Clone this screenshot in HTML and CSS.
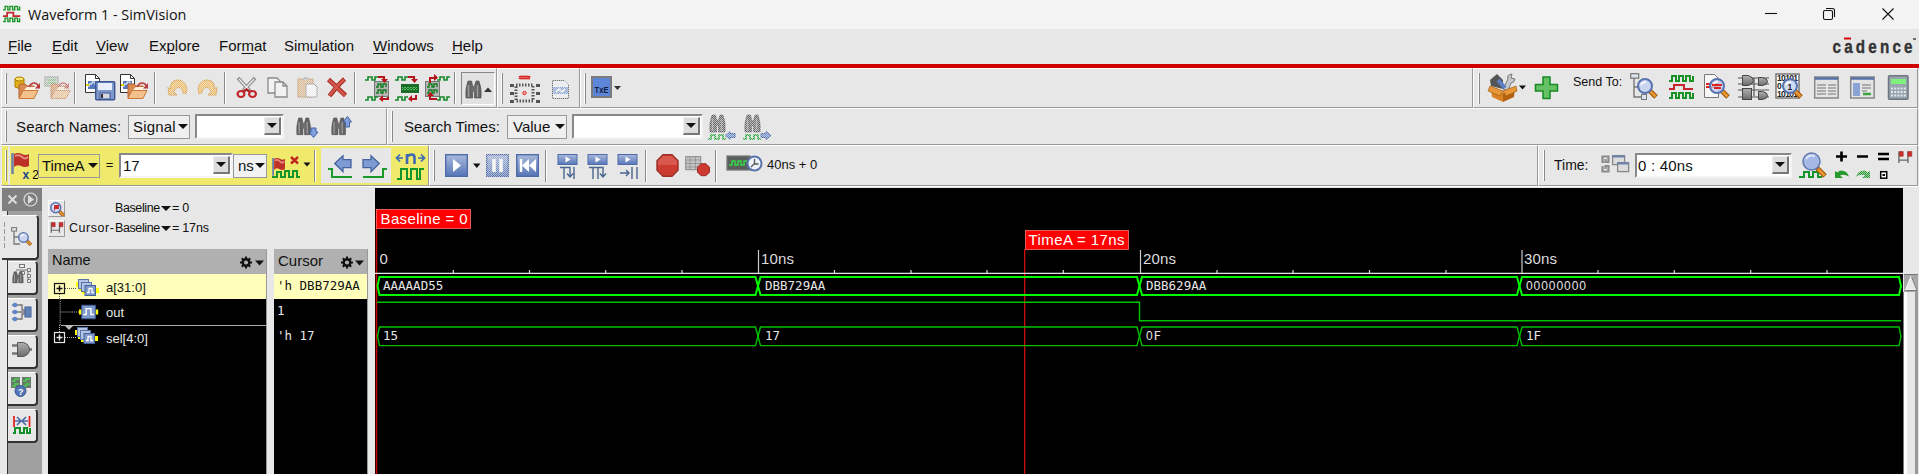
FILE: index.html
```html
<!DOCTYPE html>
<html lang="en">
<head>
<meta charset="utf-8">
<title>Waveform 1 - SimVision</title>
<link rel="stylesheet" href="styles.css">
</head>
<body>
<svg class="defs" width="0" height="0" aria-hidden="true">
  <defs>
    <pattern id="checker" width="2" height="2" patternUnits="userSpaceOnUse"><rect width="2" height="2" fill="#555"/><rect width="1" height="1" fill="#fff"/><rect x="1" y="1" width="1" height="1" fill="#fff"/></pattern>
    <mask id="dither" maskUnits="userSpaceOnUse" x="0" y="0" width="1919" height="474"><rect width="1919" height="474" fill="url(#checker)"/></mask>
    <linearGradient id="blue" x1="0" y1="0" x2="0" y2="1"><stop offset="0" stop-color="#a9b9dc"/><stop offset="1" stop-color="#5676b8"/></linearGradient>
    <linearGradient id="steel" x1="0" y1="0" x2="0" y2="1"><stop offset="0" stop-color="#b0b0b0"/><stop offset="1" stop-color="#6c6c6c"/></linearGradient>
    <g id="folder"><path d="M1 15V2q0-1 1-1h5l2 2h7v3" fill="#d98a50" stroke="#b5622c"/><path d="M1 15.500L5 7.500h15l-4 8z" fill="#f4c08c" stroke="#c97838"/><path d="M9 4h8v3H6z" fill="#fff3df"/></g>
    <g id="redo-arrow"><path d="M0 5Q3-1 8 2l2 3" fill="none" stroke="#b83a3a" stroke-width="1.500"/><path d="M11 1v5.500H6z" fill="#b83a3a"/></g>
    <g id="page"><path d="M.5.5h10l4 4v14H.5z" fill="#fff" stroke="#333"/><path d="M10.500.500v4h4" fill="none" stroke="#333"/><rect x="3" y="7" width="9" height="8" fill="#5578bd"/><path d="M4 13v-3h3v-2h3v3" fill="none" stroke="#fff"/><path d="M1 11h3" stroke="#e0d000" stroke-width="2"/></g>
    <g id="binoc"><path d="M3 1h3.500l1.200 5v12H1Q0 9 3 1zM11 1h3q3 8 2 17H9.500V6z" fill="#646464" stroke="#484848" stroke-width=".6"/><path d="M6 6h5v6H6z" fill="#6d6d6d"/><path d="M3.500 5v12M12.500 5v12" stroke="#9b9b9b" stroke-width="1.500"/></g>
    <g id="wave"><path d="M0 6h3V1h4v5h3V1h4v5h3V1h4v5h3V1" fill="none" stroke="#199326" stroke-width="2"/></g>
    <g id="chip"><rect x=".5" y=".5" width="14" height="15" fill="#b5b5b5" stroke="#777"/><path d="M2 6h2V3h3v3h2V3h3v3M2 12h2V9h3v3h2V9h3v3" fill="none" stroke="#117c1d" stroke-width="1.400"/></g>
    <g id="lens"><path d="M12.500 12.500l6.500 6.500" stroke="#a3570f" stroke-width="5"/><path d="M13 13l5.500 5.500" stroke="#e79a2d" stroke-width="2.500"/><circle cx="8" cy="8" r="7" fill="#c3d1f1" fill-opacity=".8" stroke="#5874b0" stroke-width="2"/><path d="M4 7q1-3 5-3" fill="none" stroke="#fff" stroke-width="1.500"/></g>
    <g id="flag"><path d="M1.500 0v21" stroke="#6b7fae" stroke-width="2.500"/><path d="M3 1q4-2 8 0t7 0v12q-4 2-8 0t-7 1z" fill="#bd3127"/><path d="M4 3q4-2 7 1t6 0" fill="none" stroke="#e78b80" stroke-width="2"/></g>
    <g id="left-arrow"><path d="M.7 8.500L9 .700v4h8v8H9v4z" fill="#7e9bd4" stroke="#46639f" stroke-width="1.300"/></g>
    <g id="undo-curve"><path d="M1 8l1 8h8l-3.500-3q2.500-6 7-4 3 1.500 2.500 5l3 1q2.500-6-1-10.500Q13-1 6.500 2 3 4 3.500 10z" fill="#f3c06a" stroke="#d9983a"/></g>
    <g id="bluebox"><rect x=".7" y=".7" width="21.600" height="21.600" fill="url(#blue)" stroke="#4f6ba8" stroke-width="1.400"/></g>
    <g id="stepbox"><rect x=".5" y=".5" width="19" height="10" fill="url(#blue)" stroke="#4f6ba8"/><path d="M8 2.500v6l5-3z" fill="#fff"/></g>
    <g id="tile"><rect x=".5" y=".5" width="14" height="14" fill="#7f9aca" stroke="#466099"/><path d="M2 10h3V4h5v6h3" fill="none" stroke="#fff" stroke-width="1.500"/></g>
    <g id="bus"><path d="M0 3h3v5H0zM3 7h3v5H3zM6 11h3v4H6z" fill="#ff0"/><rect x="2.500" y=".5" width="10" height="9" fill="#b4c4e4" stroke="#5873aa"/><rect x="5.500" y="3.500" width="10" height="9" fill="#b4c4e4" stroke="#5873aa"/><rect x="9" y="6.500" width="10.500" height="10" fill="#7f9aca" stroke="#466099"/><path d="M11 13.500h2V9.500h3v4h2" fill="none" stroke="#fff" stroke-width="1.300"/><path d="M20 9h3v5h-3z" fill="#ff0"/></g>
    <g id="gear"><circle cx="6" cy="6" r="3.300" fill="none" stroke="#111" stroke-width="2.400"/><path d="M6 0v2.500M6 9.500V12M0 6h2.500M9.500 6H12M1.800 1.800l1.700 1.700M8.500 8.500l1.700 1.700M10.200 1.800L8.500 3.500M3.500 8.500l-1.700 1.700" stroke="#111" stroke-width="2"/></g>
    <g id="rangeflags"><path d="M1.500 0v12M11 0v12M2 9h9" stroke="#666" stroke-width="1.400" fill="none"/><path d="M2 0h4v5H2zM11 0h4v5h-4z" fill="#c9302c" stroke="#a82020" stroke-width=".6"/></g>
    <g id="plusbox"><rect x=".5" y=".5" width="10" height="10" fill="none" stroke="currentColor" stroke-width="1.200"/><path d="M2.500 5.500h6M5.500 2.500v6" stroke="currentColor" stroke-width="1.500"/></g>
  </defs>
</svg>

<header class="titlebar">
  <svg class="app-icon" viewBox="0 0 26 24" width="18" height="18"><use href="#wave"/><path d="M0 15h6v-5h9v5h10" fill="none" stroke="#c4262b" stroke-width="2.500"/><use href="#wave" y="17"/></svg>
  <span class="title">Waveform 1 - SimVision</span>
  <svg class="win-controls" viewBox="1740 0 179 29" width="179" height="29" fill="none" stroke="#111" stroke-width="1.100"><path d="M1765 13.500h12"/><rect x="1823.500" y="10.500" width="9" height="9" rx="1.500"/><path d="M1826 8.500h6.500q2 0 2 2v6.500"/><path d="M1882.500 8.500l11 11M1893.500 8.500l-11 11"/></svg>
</header>

<nav class="menubar">
  <span><u>F</u>ile</span><span><u>E</u>dit</span><span><u>V</u>iew</span><span>Ex<u>p</u>lore</span><span>For<u>m</u>at</span><span>Sim<u>u</u>lation</span><span><u>W</u>indows</span><span><u>H</u>elp</span>
  <svg class="brand" viewBox="1829 29 90 34" width="90" height="34"><text transform="translate(1832.500 53) scale(.8 1)" textLength="100" class="brand-text">cadence</text><path d="M1844 38.500h7" stroke="#d8000c" stroke-width="2"/><path d="M1913 39h3" stroke="#444" stroke-width="1.500"/></svg>
</nav>

<div class="toolbar toolbar-main">
  <div class="group group-file">
    <i class="handle"></i>
    <svg viewBox="7 69 36 38" width="36" height="38"><path d="M15 79v8q4.500 3 9 0v-8z" fill="#e4ae16" stroke="#a97a00"/><ellipse cx="19.500" cy="79" rx="4.500" ry="2" fill="#ffe36a" stroke="#a97a00"/><use href="#folder" x="18" y="83"/><use href="#redo-arrow" x="29" y="82"/></svg>
    <svg viewBox="43 69 31 38" width="31" height="38"><g mask="url(#dither)" opacity=".75"><rect x="45" y="77" width="13" height="9" fill="#b9c9b9" stroke="#777"/><path d="M47 80h9M47 83h9" stroke="#33a33f"/><use href="#folder" x="50" y="83"/><use href="#redo-arrow" x="58" y="82"/></g></svg>
    <i class="sep"></i>
    <svg viewBox="76 69 42 38" width="42" height="38"><use href="#page" x="85" y="74"/><rect x="95.700" y="81.700" width="19" height="18" rx="1" fill="#7f99cd" stroke="#3d5693" stroke-width="1.400"/><rect x="98" y="83" width="14" height="7" fill="#e8eefb"/><rect x="100" y="93" width="10" height="6" fill="#d4d8e0" stroke="#3d5693"/><path d="M102 94v4" stroke="#333" stroke-width="2"/></svg>
    <svg viewBox="118 69 36 38" width="36" height="38"><use href="#page" x="120" y="74"/><use href="#folder" x="127" y="83"/><use href="#redo-arrow" x="137" y="82"/></svg>
    <i class="sep"></i>
    <svg viewBox="156 69 36 38" width="36" height="38"><g mask="url(#dither)"><use href="#undo-curve" x="167" y="79"/></g></svg>
    <svg viewBox="192 69 32 38" width="32" height="38"><g mask="url(#dither)"><use href="#undo-curve" transform="translate(218 79) scale(-1 1)"/></g></svg>
    <i class="sep"></i>
    <svg viewBox="226 69 36 38" width="36" height="38"><path d="M238 78l12 13M255 78l-12 13" stroke="#8c8c8c" stroke-width="3.500"/><path d="M239 79l11 12M254 79l-11 12" stroke="#eee" stroke-width="1.300"/><ellipse cx="241" cy="94" rx="3.400" ry="3" fill="none" stroke="#c3272b" stroke-width="2.200"/><ellipse cx="252.500" cy="94" rx="3.400" ry="3" fill="none" stroke="#c3272b" stroke-width="2.200"/><path d="M243.500 91.500l3-2 3 2" fill="none" stroke="#a81f24" stroke-width="2.500"/></svg>
    <svg viewBox="262 69 30 38" width="30" height="38"><g fill="#f2f2f2" stroke="#8a8a8a" stroke-width="1.300"><path d="M268 78h9l3 3v12h-12z"/><path d="M275 82h8l4 4v11h-12z"/><path d="M283 82v4h4" fill="none"/></g></svg>
    <svg viewBox="292 69 30 38" width="30" height="38"><g mask="url(#dither)" opacity=".85"><rect x="298" y="79" width="15" height="18" fill="#e2b587" stroke="#b88650"/><path d="M302 80q4-5 7 0" fill="#bbb" stroke="#888"/><path d="M306 84h8l3 3v10h-11z" fill="#fff" stroke="#888"/></g></svg>
    <svg viewBox="322 69 32 38" width="32" height="38"><path d="M328.500 79.500l17 16M344.500 79q-8 7-15 17" stroke="#a72c21" stroke-width="4.600" fill="none"/><path d="M329 80l16 15.500M344 79.500q-8 7-14.500 16" stroke="#d2564a" stroke-width="2.600" fill="none"/></svg>
    <i class="sep"></i>
    <svg viewBox="356 69 36 38" width="36" height="38"><use href="#chip" x="374" y="81"/><path d="M365 80h3v-3h4v3h3v-3h3M365 100h3v-3h4v3h3v-3h3" fill="none" stroke="#15892a" stroke-width="1.600"/><path d="M378 77h6v4M388 97v2h-6" fill="none" stroke="#b6131c" stroke-width="2"/><path d="M381 79h7l-3.500 4zM383 95v7l-4-3z" fill="#b6131c"/></svg>
    <svg viewBox="392 69 30 38" width="30" height="38"><rect x="401" y="84" width="18" height="9" fill="#1d6b28"/><path d="M402 87l3 3 3-3 3 3 3-3 3 3M402 90l3-3 3 3 3-3 3 3 3-3" fill="none" stroke="#4fc45c"/><path d="M395 80h3v-3h4v3h3v-3h3M395 100h3v-3h4v3h3v-3h3" fill="none" stroke="#15892a" stroke-width="1.600"/><path d="M408 77h6v4M416 95v4h-6" fill="none" stroke="#b6131c" stroke-width="2"/><path d="M411 79h7l-3.500 4zM412 95v7l-4-3z" fill="#b6131c"/></svg>
    <svg viewBox="422 69 32 38" width="32" height="38"><use href="#chip" x="425" y="81"/><path d="M437 80h3v-3h4v3h3v-3h3M437 100h3v-3h4v3h3v-3h3" fill="none" stroke="#15892a" stroke-width="1.600"/><path d="M430 83v-5h7M430 95v4h7" fill="none" stroke="#b6131c" stroke-width="2"/><path d="M434 74v7l4-3.500zM427 96h7l-3.500-4z" fill="#b6131c"/></svg>
    <i class="sep"></i>
    <button class="pressed"><svg viewBox="462 72 32 31" width="32" height="31"><use href="#binoc" x="465" y="79"/><path d="M484 91h8l-4-4.500z" fill="#333"/></svg></button>
  </div>
  <div class="group group-trace">
    <i class="handle"></i>
    <svg viewBox="504 69 44 38" width="44" height="38"><path d="M520 76l2 3 2-3 2 3 2-3 2 3 1-3M520 79l2-3 2 3 2-3 2 3 2-3" fill="none" stroke="#d22" stroke-width="1.200"/><g fill="none" stroke="#555" stroke-dasharray="1.500 1.500"><rect x="517" y="85" width="17" height="16" stroke-width="3"/><path d="M513 84v20M539 84v20" stroke-dasharray="3 5" stroke-width="4"/></g><circle cx="525.500" cy="93" r="1.700" fill="#f7b0b0" stroke="#d22"/></svg>
    <svg viewBox="548 69 28 38" width="28" height="38"><g mask="url(#dither)"><path d="M553.500 80.500h12l4 4v14h-16z" fill="#eef1f7" stroke="#777"/><rect x="554" y="87" width="15" height="7" fill="#8fabd8"/><path d="M557 92l3-3 3 3 3-3" fill="none" stroke="#fff" stroke-width="1.500"/></g></svg>
  </div>
  <div class="group grow">
    <i class="handle"></i>
    <svg viewBox="587 69 40 38" width="40" height="38"><rect x="593" y="77" width="19" height="20" fill="#5e86d8" stroke="#7b7b7b" stroke-width="2"/><text x="595.500" y="93" class="txe" textLength="14" lengthAdjust="spacingAndGlyphs">TxE</text><path d="M615 86h7l-3.500 4z" fill="#333"/></svg>
  </div>
  <div class="group group-send">
    <i class="handle wide"></i>
    <svg viewBox="1480 69 50 38" width="50" height="38"><path d="M1491 86l-1-6 7-6 6 6v9z" fill="#555"/><path d="M1503 89l5-10q-2-4 4-5l-1 4 4 1q-1 4-4 4l-3 8z" fill="#c5c8cb" stroke="#777"/><path d="M1498 80l7 8" stroke="#5c7ec2" stroke-width="4"/><path d="M1491 88l12 5v9l-11-5z" fill="#d98325"/><path d="M1515 88l-12 5v9l11-5z" fill="#b3620f"/><path d="M1490 86l13 5-3 5-12-5zM1516 86l-13 5 3 5 11-5z" fill="#e8963a" stroke="#a9600f" stroke-width=".7"/><path d="M1519 85.500h7l-3.500 4z" fill="#111"/></svg>
    <svg viewBox="1530 69 38 38" width="38" height="38"><path d="M1543 77h7v7.500h7.500v6.500h-7.500v7.500h-7v-7.500h-7.500v-6.500h7.500z" fill="#65c163" stroke="#158a24" stroke-width="1.500"/></svg>
    <span class="send-label">Send To:</span>
    <svg viewBox="1626 69 36 38" width="36" height="38"><path d="M1634 78v19h8M1634 87h6" fill="none" stroke="#777" stroke-width="1.400"/><rect x="1630.700" y="73.700" width="8" height="4.500" fill="#dde3ee" stroke="#777" stroke-width="1.200"/><rect x="1641.500" y="94.500" width="5" height="5" fill="#dde3ee" stroke="#777"/><use href="#lens" x="1637" y="78"/></svg>
    <svg viewBox="1662 69 36 38" width="36" height="38"><use href="#wave" x="1669" y="75"/><path d="M1669 89h5v-4h10v4h9" fill="none" stroke="#c4262b" stroke-width="2"/><use href="#wave" x="1669" y="92"/></svg>
    <svg viewBox="1698 69 36 38" width="36" height="38"><path d="M1704.500 74.500h10l4 4v19h-14z" fill="#f7f7f7" stroke="#777"/><path d="M1706 84h12M1706 87h12" stroke="#d22" stroke-width="2"/><use href="#lens" x="1709" y="78"/><path d="M1712 85h10M1714 88h7" stroke="#d22" stroke-width="2"/></svg>
    <svg viewBox="1734 69 38 38" width="38" height="38"><path d="M1738 78h31M1738 84h31M1738 90h31M1738 97h31M1754 78v18" fill="none" stroke="#555" stroke-width="1.200"/><g fill="url(#steel)" stroke="#444"><path d="M1742.500 75.500h6q5 2 5 5t-5 5h-6z"/><path d="M1758.500 77.500h4q5 1 5 4t-5 4h-4z"/><rect x="1742.500" y="88.500" width="9" height="11"/><path d="M1758.500 91.500h4q5 1 5 4t-5 4h-4z"/></g></svg>
    <svg viewBox="1772 69 36 38" width="36" height="38"><rect x="1776" y="74" width="23" height="24" fill="#fff" stroke="#777" stroke-width="1.500"/><g class="bits"><text x="1777" y="81" textLength="21">10101</text><text x="1777" y="89">0</text><text x="1777" y="97" textLength="21">10101</text></g><use href="#lens" x="1782" y="78"/><text x="1787.500" y="90" class="bits">1</text></svg>
    <svg viewBox="1808 69 36 38" width="36" height="38"><rect x="1814.700" y="77" width="23.500" height="21" fill="#e4e4e4" stroke="#888" stroke-width="1.500"/><path d="M1815 78.500h23" stroke="#5671a8" stroke-width="2.500"/><path d="M1817 85h9M1828 85h8M1817 88h9M1828 88h8M1817 91h9M1828 91h8M1817 94h9M1828 94h8" stroke="#999" stroke-width="1.300"/></svg>
    <svg viewBox="1844 69 37 38" width="37" height="38"><rect x="1850.700" y="77" width="23.500" height="21" fill="#e4e4e4" stroke="#888" stroke-width="1.500"/><path d="M1851 78.500h23" stroke="#5671a8" stroke-width="2.500"/><rect x="1853" y="83" width="7" height="13" fill="#8ba3d4"/><path d="M1862 85h9M1862 88h9M1862 91h5" stroke="#999" stroke-width="1.300"/><path d="M1863 94h8" stroke="#3aa53f" stroke-width="2.500"/></svg>
    <svg viewBox="1881 69 36 38" width="36" height="38"><rect x="1888.500" y="75.700" width="19.500" height="23.500" rx="1" fill="#9aa4ad" stroke="#6b7680" stroke-width="1.500"/><rect x="1891" y="79" width="15" height="5" fill="#7ef07c"/><path d="M1891 88.500h15M1891 92h15M1891 95.500h15" stroke="#dfe8ee" stroke-width="2" stroke-dasharray="2 1.200"/></svg>
  </div>
</div>

<div class="toolbar toolbar-search">
  <div class="group">
    <i class="handle"></i>
    <label class="names-label">Search Names:</label>
    <span class="select select-signal">Signal<b></b></span>
    <span class="combo combo-names"><em></em><i class="drop"></i></span>
    <svg viewBox="284 109 38 35" width="38" height="35"><use href="#binoc" transform="translate(296 117) scale(.9 .98)"/><path d="M311 128h5v4h2l-4.500 5.500-4.500-5.500h2z" fill="#7f9edb" stroke="#4464a6"/></svg>
    <svg viewBox="322 109 64 35" width="64" height="35"><use href="#binoc" transform="translate(331 117) scale(.9 .98)"/><path d="M345.500 127h4v-5h2l-4-5.500-4.500 5.500h2.500z" fill="#7f9edb" stroke="#4464a6"/></svg>
  </div>
  <div class="group grow">
    <i class="handle"></i>
    <label class="times-label">Search Times:</label>
    <span class="select select-value">Value<b></b></span>
    <span class="combo combo-times"><em></em><i class="drop"></i></span>
    <svg viewBox="702 109 36 35" width="36" height="35"><g mask="url(#dither)"><use href="#binoc" x="708" y="114"/><path d="M707 139h3v-4h4v4h4v-4h4v4h3" fill="none" stroke="#18a32a" stroke-width="1.600"/><path d="M724 135.500l5-4v2h5v4h-5v2z" fill="#6e8fcf" stroke="#3f5d9e"/></g></svg>
    <svg viewBox="738 109 36 35" width="36" height="35"><g mask="url(#dither)"><use href="#binoc" x="743" y="114"/><path d="M742 139h3v-4h4v4h4v-4h4v4h3" fill="none" stroke="#18a32a" stroke-width="1.600"/><path d="M770 135.500l-5-4v2h-5v4h5v2z" fill="#6e8fcf" stroke="#3f5d9e"/></g></svg>
  </div>
</div>

<div class="toolbar toolbar-time">
  <div class="group cursor-group">
    <i class="handle"></i>
    <svg viewBox="7 146 31 39" width="31" height="39"><path d="M8 146h2v39H8z" fill="#e7e7e7"/><use href="#flag" x="11" y="153"/><text x="22.500" y="178.500" class="x2"><tspan fill="#24448c">x</tspan><tspan dx="3" class="count">2</tspan></text></svg>
    <span class="select select-time">TimeA<b></b></span>
    <span class="equals">=</span>
    <span class="combo combo-time"><em>17</em><i class="drop"></i></span>
    <span class="select select-unit">ns<b></b></span>
    <svg viewBox="267 146 47 39" width="47" height="39"><use href="#flag" transform="translate(272 158) scale(.72 .85)"/><path d="M291 157l7 6.500M298 157l-7 6.500" stroke="#c0261f" stroke-width="2.400"/><path d="M272 177h5v-5h4v5h4v-6h4v6h4v-6h4v6h3" fill="none" stroke="#12962c" stroke-width="2"/><path d="M303.500 162.500h7l-3.500 4z" fill="#111"/></svg>
    <i class="sep"></i>
    <span class="nav-box">
      <svg viewBox="321 148 35 35" width="35" height="35"><path d="M328 169h4v8h20" fill="none" stroke="#199a2d" stroke-width="2"/><use href="#left-arrow" x="334" y="155"/></svg>
      <svg viewBox="356 148 35 35" width="35" height="35"><path d="M387 169h-4v8h-20" fill="none" stroke="#199a2d" stroke-width="2"/><use href="#left-arrow" transform="translate(380 155) scale(-1 1)"/></svg>
    </span>
    <svg viewBox="391 146 36 39" width="36" height="39"><path d="M397 158h6M400 154.500l-3.500 3.500 3.500 3.500M418 158h6M421 154.500l3.500 3.500-3.500 3.500" fill="none" stroke="#3c68b4" stroke-width="1.700"/><path d="M407 164v-10M407 157q2-2.500 4.500-2.500 3 0 3 3v6.500" fill="none" stroke="#3c68b4" stroke-width="2.600"/><path d="M397 179h4v-10h6v10h4v-10h6v10h3v-10h4" fill="none" stroke="#12962c" stroke-width="2"/></svg>
  </div>
  <div class="group grow">
    <i class="handle"></i>
    <svg viewBox="435 146 47 39" width="47" height="39"><use href="#bluebox" x="445" y="154"/><path d="M453 159v13l8-6.500z" fill="#fff"/><path d="M473 163.500h7.500l-3.700 4.500z" fill="#111"/></svg>
    <svg viewBox="482 146 30 39" width="30" height="39"><g mask="url(#dither)"><use href="#bluebox" x="486" y="154"/><path d="M494 159v13M501 159v13" stroke="#fff" stroke-width="3.500"/></g></svg>
    <svg viewBox="512 146 33 39" width="33" height="39"><use href="#bluebox" x="516" y="154"/><path d="M521 159v13" stroke="#fff" stroke-width="2.500"/><path d="M529 159v13l-7-6.500zM536 159v13l-7-6.500z" fill="#fff"/></svg>
    <i class="sep"></i>
    <svg viewBox="547 146 35 39" width="35" height="39"><use href="#stepbox" x="557.500" y="154"/><path d="M560 167.500h10v9M564 167v12M574 167v12M567 173.500l3 3.500 3-3.500" fill="none" stroke="#49668f" stroke-width="1.400"/></svg>
    <svg viewBox="582 146 30 39" width="30" height="39"><use href="#stepbox" x="587.500" y="154"/><path d="M589 167.500h14v8M593 168v11M598 168v11M600 173.500l3 3.500 3-3.500" fill="none" stroke="#49668f" stroke-width="1.400"/></svg>
    <svg viewBox="612 146 33 39" width="33" height="39"><use href="#stepbox" x="617.500" y="154"/><path d="M620 173h9M626 170l3 3-3 3M632 167v12M637 167v12" fill="none" stroke="#49668f" stroke-width="1.400"/></svg>
    <i class="sep"></i>
    <svg viewBox="647 146 35 39" width="35" height="39"><path d="M663 154.700h9l6 6v9.500l-6 6h-9l-6-6v-9.500z" fill="#cc3a30" stroke="#9c3028" stroke-width="1.400"/><path d="M663 156h9l5 5v4h-19v-4z" fill="#df6c60" opacity=".6"/></svg>
    <svg viewBox="682 146 33 39" width="33" height="39"><rect x="685.700" y="156.700" width="15" height="13" fill="#c4c4c4" stroke="#888"/><path d="M686 160h15M686 163.500h15M686 167h15M690 157v13M695.500 157v13" stroke="#999"/><path d="M701 163.700h5l3.500 3.500v5l-3.500 3.500h-5l-3.500-3.500v-5z" fill="#cc3a30" stroke="#9c3028"/></svg>
    <i class="sep"></i>
    <svg viewBox="717 146 50 39" width="50" height="39"><rect x="727" y="156" width="23" height="14" fill="#5a5f5b" stroke="#777" stroke-width="1.300"/><path d="M729 165h3v-4h3v4h3v-4h3v4h3v-4h3" fill="none" stroke="#35d848" stroke-width="1.500"/><circle cx="754.500" cy="163.500" r="7" fill="#eef2fa" stroke="#5874ab" stroke-width="2"/><path d="M754.500 159v5h4M754 164l-3 3" fill="none" stroke="#555" stroke-width="1.300"/></svg>
    <span class="sim-time">40ns + 0</span>
  </div>
  <div class="group group-range">
    <i class="handle wide"></i>
    <label class="range-label">Time:</label>
    <svg viewBox="1595 146 40 39" width="40" height="39"><g fill="none" stroke="#8c8c8c" stroke-width="2.200"><path d="M1604 162h-1.500v-5.500h6v5.500h-3v-3"/><path d="M1602.500 166v5.500h6v-5.500h-3v3"/></g><rect x="1612.600" y="155.600" width="12" height="9" fill="#ddd" stroke="#888" stroke-width="1.300"/><path d="M1612 156.500h13" stroke="#6b82ad" stroke-width="2"/><rect x="1617.600" y="162.600" width="11" height="9" fill="#ddd" stroke="#888" stroke-width="1.300"/><path d="M1617 163.500h12" stroke="#6b82ad" stroke-width="2"/></svg>
    <span class="combo combo-range"><em>0 : 40ns</em><i class="drop"></i></span>
    <svg viewBox="1792 146 40 39" width="40" height="39"><path d="M1799 177h5v-5h5v5h4v-5h5v5h4" fill="none" stroke="#12962c" stroke-width="2"/><path d="M1817 168l8 8" stroke="#a3570f" stroke-width="5"/><path d="M1818 169l6.500 6.500" stroke="#e79a2d" stroke-width="2.500"/><circle cx="1811.500" cy="161.500" r="8.500" fill="#a6b9e6" stroke="#6279ad" stroke-width="1.500"/><path d="M1806 159q3-5 9-3" fill="none" stroke="#dde6fb" stroke-width="2"/></svg>
    <svg viewBox="1832 146 85 39" width="85" height="39"><path d="M1836 156.500h11M1841.500 151.500v10M1857 156.500h11M1878 154h11M1878 159h11" stroke="#000" stroke-width="2.700"/><use href="#rangeflags" transform="translate(1897.500 151.500) scale(.95)"/><path d="M1835 171v7h8l-3-2.500q4-2 9 1-2-6-8-6-2 0-3.500 2z" fill="#249a2c"/><g mask="url(#dither)"><path d="M1870 171v7h-8l3-2.500q-4-2-9 1 2-6 8-6 2 0 3.500 2z" fill="#249a2c"/></g><rect x="1880.700" y="171.700" width="6" height="6.500" fill="#fff" stroke="#000" stroke-width="1.500"/><path d="M1882.500 175h2.500" stroke="#000" stroke-width="2"/></svg>
  </div>
</div>

<main class="workspace">
  <aside class="sidebar">
    <svg class="side-head" viewBox="2 188 40 23" width="40" height="23"><path d="M8.500 195.500l8 8M16.500 195.500l-8 8" stroke="#ddd" stroke-width="2"/><circle cx="30.500" cy="199.500" r="6.500" fill="none" stroke="#ddd" stroke-width="1.200"/><path d="M28 195v9l6-4.500z" fill="#ddd"/></svg>
    <div class="tab active"><svg viewBox="2 216 35 42" width="35" height="42"><path d="M4.500 222v28" stroke="#999" stroke-dasharray="5 2"/><path d="M14 231v13h6M14 237h5" fill="none" stroke="#777" stroke-width="1.300"/><rect x="11.600" y="227.600" width="5" height="3.500" fill="#ddd" stroke="#777"/><use href="#lens" transform="translate(18 232) scale(.68)"/></svg></div>
    <div class="tab"><svg viewBox="8 262 27 32" width="27" height="32"><path d="M22 267v-2M16 270h12M28 270v11" stroke="#777"/><g fill="#eee" stroke="#777"><rect x="19.500" y="264.500" width="5" height="3"/><path d="M27.500 268.500h3v3h-3zM27.500 274.500h3v3h-3zM27.500 279.500h3v3h-3zM20.500 271.500h4v3h-4z"/></g><use href="#binoc" transform="translate(12 271) scale(.7 .66)"/></svg></div>
    <div class="tab"><svg viewBox="8 298 27 32" width="27" height="32"><path d="M12 304h10v5h5M12 311h15M12 318h10v-5h5" fill="none" stroke="#777" stroke-width="1.400"/><rect x="25" y="306" width="6" height="10" fill="#6683b8" stroke="#45609a"/><circle cx="15" cy="304" r="2.300" fill="#5c84cc"/><circle cx="15" cy="311" r="2.300" fill="#5c84cc"/><circle cx="15" cy="318" r="2.300" fill="#5c84cc"/></svg></div>
    <div class="tab"><svg viewBox="8 335 27 32" width="27" height="32"><path d="M12 344.500h6M12 352.500h6M26 348.500h6" stroke="#777" stroke-width="2.500"/><path d="M17.500 341.500h6q6 2 6 7t-6 7h-6z" fill="url(#steel)" stroke="#555"/></svg></div>
    <div class="tab"><svg viewBox="8 372 27 32" width="27" height="32"><path d="M11 376h9v11h-9zM22 376h9v11h-9z" fill="#6b786c"/><path d="M12 380h3v-2h4M12 385h3v-2h4M23 380h3v-2h4M23 385h3v-2h4" fill="none" stroke="#45cf52" stroke-width="1.400"/><circle cx="20.500" cy="390" r="5.500" fill="#5276b8" stroke="#3c5993"/><text x="18" y="393.500" class="query">?</text></svg></div>
    <div class="tab"><svg viewBox="8 409 27 32" width="27" height="32"><path d="M14 415v11M29.500 415v11" stroke="#e51c1c" stroke-width="1.700"/><path d="M15 420h5M17 416l4 4-4 4M28 420h-5M26 416l-4 4 4 4" fill="none" stroke="#4d6ca6" stroke-width="1.700"/><path d="M13 432h2v-5h5v5h4v-5h3v5h3v-5" fill="none" stroke="#12902a" stroke-width="2"/></svg></div>
  </aside>

  <section class="signals">
    <div class="cursors">
      <div class="cursor-row"><i class="mini"><svg viewBox="49 200 16 15" width="16" height="15"><use href="#lens" transform="translate(50 201) scale(.72)"/><path d="M54 211v-7h5v4h-4" fill="#c9302c"/></svg></i><span class="base-name">Baseline</span><b></b><span>= 0</span></div>
      <div class="cursor-row"><i class="mini"><svg viewBox="49 221 16 15" width="16" height="15"><use href="#rangeflags" transform="translate(50 222.500) scale(.86)"/></svg></i><span class="cur-name">Cursor-</span><span class="base-name">Baseline</span><b></b><span>= 17ns</span></div>
    </div>
    <div class="lists">
      <div class="list names">
        <div class="list-head name-head"><span>Name</span><svg viewBox="236 249 28 24" width="28" height="24"><use href="#gear" x="238" y="255.500"/><path d="M253 259.500h9l-4.500 5z" fill="#111"/></svg></div>
        <div class="signal selected"><svg viewBox="48 274 58 25" width="58" height="25"><path d="M65 288.500h11M59.500 294v6" stroke="#555" stroke-dasharray="1 1"/><use href="#plusbox" x="54" y="283"/><use href="#bus" x="76" y="279"/></svg><span>a[31:0]</span></div>
        <div class="signal"><svg viewBox="48 299 58 27" width="58" height="26"><path d="M59.500 299v27M60 312.500h19" stroke="#bbb" stroke-dasharray="1 1"/><path d="M79 310h3v5h-3zM96 310h3v5h-3z" fill="#ff0"/><use href="#tile" x="81.500" y="305"/></svg><span>out</span></div>
        <div class="signal"><svg viewBox="48 326 58 26" width="58" height="26"><path d="M59.500 326v8M65 338.500h11" stroke="#bbb" stroke-dasharray="1 1"/><path d="M64 326h10l-5 5z" fill="#bbb"/><use href="#plusbox" x="54" y="333"/><use href="#bus" x="75" y="328"/></svg><span>sel[4:0]</span></div>
      </div>
      <div class="list values">
        <div class="list-head"><span>Cursor</span><svg viewBox="338 249 28 24" width="28" height="24"><use href="#gear" x="340" y="255.500"/><path d="M354 259.500h9l-4.500 5z" fill="#111"/></svg></div>
        <div class="value selected">'h DBB729AA</div>
        <div class="value">1</div>
        <div class="value">'h 17</div>
      </div>
    </div>
  </section>

  <svg class="wave-canvas" viewBox="375 188 1528 286" width="1528" height="286">
    <rect x="375" y="188" width="1528" height="286" fill="#000"/>
    <path d="M376.500 209v265" stroke="#c80000" stroke-width="1.500"/>
    <path d="M1024.700 249v225" stroke="#e01010" stroke-width="1.200"/>
    <path d="M375 273.300h1528" stroke="#e6e6e6" stroke-width="1.200"/>
    <path d="M453.300 270v3M529.500 270v3M605.700 270v3M682 270v3M834.500 270v3M911 270v3M987 270v3M1063.300 270v3M1217 270v3M1293 270v3M1369.500 270v3M1446 270v3M1598 270v3M1674.300 270v3M1750.700 270v3M1827 270v3" stroke="#ddd" stroke-width="1.200"/>
    <path d="M758.500 250v23M1140.500 250v23M1522 250v23" stroke="#ccc" stroke-width="1.200"/>
    <g class="ruler-text"><text x="379.500" y="264">0</text><text x="761" y="264" textLength="33">10ns</text><text x="1143" y="264" textLength="33">20ns</text><text x="1524" y="264" textLength="33">30ns</text></g>
    <g fill="none" stroke="#00f800" stroke-width="2">
      <path d="M377.500 286l2-9h376l2.500 9-2.500 9h-376z"/><path d="M758 286l2.500-9h376.500l2.500 9-2.500 9h-376.500z"/><path d="M1139.500 286l2.500-9h375l2.500 9-2.500 9h-375z"/><path d="M1519.500 286l2.500-9h377l2 9-2 9h-377z"/>
    </g>
    <path d="M377 302.200h762.500v18.600h761.500" fill="none" stroke="#00c400" stroke-width="1.400"/>
    <g fill="none" stroke="#00c000" stroke-width="1.400">
      <path d="M377.500 336.300l2-9.300h376l2.500 9.300-2.500 9.300h-376z"/><path d="M758 336.300l2.500-9.300h376.500l2.500 9.300-2.500 9.300h-376.500z"/><path d="M1139.500 336.300l2.500-9.300h375l2.500 9.300-2.500 9.300h-375z"/><path d="M1519.500 336.300l2.500-9.300h377l2 9.300-2 9.300h-377z"/>
    </g>
    <g class="bus-text"><text x="383" y="290">AAAAAD55</text><text x="765" y="290">DBB729AA</text><text x="1146" y="290">DBB629AA</text><text x="1526" y="290" class="zeros" textLength="60">00000000</text><text x="383" y="340">15</text><text x="765" y="340">17</text><text x="1146" y="340"><tspan class="zeros">0</tspan><tspan x="1153.500">F</tspan></text><text x="1526" y="340">1F</text></g>
    <rect x="376.500" y="209.500" width="94" height="19" fill="#f00" stroke="#ff7070" stroke-width=".8"/>
    <rect x="1025.500" y="230.500" width="103" height="19" fill="#f00" stroke="#ff7070" stroke-width=".8"/>
    <g class="flag-text"><text x="380.500" y="224" textLength="87">Baseline = 0</text><text x="1028.500" y="245" textLength="96">TimeA = 17ns</text></g>
  </svg>

  <div class="scroll">
    <svg class="scroll-up" viewBox="0 0 13 17" width="13" height="17"><path d="M6.500 1.500L12 15H1z" fill="#e7e7e7" stroke="#fff"/><path d="M7 2l5.500 13.500H1" fill="none" stroke="#777"/></svg>
    <div class="thumb"></div>
  </div>
</main>
</body>
</html>
```

FILE: styles.css
```css
* { box-sizing: border-box; }

body {
  margin: 0;
  width: 1919px;
  height: 474px;
  overflow: hidden;
  display: flex;
  flex-direction: column;
  background: #e7e7e7;
  color: #111;
  font: 15px/1.15 "Liberation Sans", Arial, sans-serif;
}

.defs { position: absolute; }
svg { display: block; flex: none; }

/* title bar */
.titlebar {
  height: 29px;
  flex: none;
  display: flex;
  align-items: flex-start;
  padding-left: 3px;
  background: #f3f3f3;
}
.app-icon { margin-top: 5px; }
.title {
  margin-left: 7px;
  font: 14.4px/29px "Open Sans", "Noto Sans", sans-serif;
  height: 29px;
}
.win-controls { margin-left: auto; }

/* menu bar */
.menubar {
  height: 39px;
  flex: none;
  display: grid;
  grid-template-columns: 44px 44px 53px 70px 65px 89px 79px 1fr auto;
  line-height: 34px;
  padding-left: 8px;
  border-bottom: 4px solid #d00000;
}
.menubar u { text-underline-offset: 2px; text-decoration-thickness: 1px; }
.brand-text { font: bold 19px "Liberation Sans", sans-serif; fill: #333; stroke: #333; stroke-width: .4px; }

/* toolbars */
.toolbar { display: flex; flex: none; padding: 0 1px; }
.toolbar-main { height: 40px; }
.toolbar-search { height: 37px; }
.toolbar-time { height: 41px; }
.group {
  display: flex;
  align-items: center;
  border: 1px solid;
  border-color: #fff #999 #999 #fff;
}
.grow { flex: 1; }
.group-file { width: 496px; }
.group-trace { width: 83px; }
.group-send { width: 445px; }
.cursor-group { width: 428px; background: #efe96c; border-left-color: #e7e7e7; }
.group-range { width: 380px; }

.handle {
  flex: none;
  width: 2px;
  height: 31px;
  margin-left: 3px;
  border-left: 1px solid #fff;
  border-right: 1px solid #888;
}
.handle.wide { margin-left: 4px; }
.sep {
  flex: none;
  width: 2px;
  height: 32px;
  border-left: 1px solid #888;
  border-right: 1px solid #fff;
}
.pressed {
  margin: 0 0 0 5px;
  padding: 0;
  width: 34px;
  height: 33px;
  background: #e2e2e2;
  border: 1px solid;
  border-color: #888 #fff #fff #888;
}
.txe { font: bold 9px "Liberation Sans", sans-serif; fill: #10203f; }
.x2 { font: bold 12px "Liberation Sans", sans-serif; }
.count { font-weight: normal; }
.bits { font: bold 8.5px "Liberation Sans", sans-serif; fill: #222; }
.query { font: bold 9px "Liberation Sans", sans-serif; fill: #fff; }

.send-label { align-self: flex-start; margin: 6px 0 0 5px; width: 53px; font-size: 12.5px; white-space: nowrap; }
.names-label { margin-left: 9px; width: 112px; letter-spacing: .15px; white-space: nowrap; }
.times-label { margin-left: 11px; width: 103px; white-space: nowrap; }
.range-label { margin-left: 9px; width: 41px; font-size: 14px; }
.equals { width: 19px; text-align: center; font-size: 13px; }
.sim-time { font-size: 13px; }

.select {
  display: flex;
  align-items: center;
  justify-content: space-between;
  height: 24px;
  padding: 0 1px 0 4px;
  border: 1px solid #999;
  background: #efefef;
}
.select-signal { width: 62px; letter-spacing: .2px; }
.select-value { width: 60px; padding-left: 5px; }
.select-time { width: 62px; padding-left: 3px; background: none; letter-spacing: -.1px; }
.select-unit { width: 34px; background: #f2f2f2; }
.select b, .cursor-row b {
  border: solid transparent;
  border-width: 5px 5px 0;
  border-top-color: #111;
}

.combo {
  display: flex;
  height: 25px;
  padding: 1px;
  background: #fff;
  border: 2px solid;
  border-color: #888 #f4f4f4 #f4f4f4 #888;
}
.combo em { flex: 1; font-style: normal; line-height: 19px; padding-left: 1px; white-space: nowrap; }
.combo-names { width: 89px; margin-left: 5px; }
.combo-times { width: 131px; margin-left: 5px; }
.combo-time { width: 114px; }
.combo-range { width: 157px; }
.combo-range em { padding-left: 0; letter-spacing: .2px; }
.drop {
  width: 17px;
  height: 18px;
  display: grid;
  place-items: center;
  background: #dcdcdc;
  border: 1px solid;
  border-color: #eee #777 #777 #eee;
  border-right-width: 2px;
  border-bottom-width: 2px;
}
.drop::before {
  content: "";
  border: solid transparent;
  border-width: 5px 5px 0;
  border-top-color: #111;
}
.nav-box { display: flex; margin-left: 5px; background: #e7e7e7; }

/* workspace */
.workspace {
  flex: 1;
  display: flex;
  padding: 1px 1px 0 2px;
  border-top: 1px solid #fff;
  min-height: 0;
}
.sidebar {
  width: 40px;
  display: flex;
  flex-direction: column;
  align-items: flex-start;
  background: linear-gradient(to right, #e7e7e7 5px, #333 5px, #333 6px, #a0a0a0 6px);
}
.side-head { background: #808080; }
.tab {
  width: 30px;
  height: 34px;
  margin: 0 0 3px 6px;
  background: #e7e7e7;
  border: solid #333;
  border-width: 0 2px 2px 0;
  border-radius: 0 4px 4px 0;
  border-top: 1px solid #fff;
}
.tab.active { width: 37px; height: 45px; margin: 4px 0 1px 0; }

.signals { width: 333px; padding-left: 6px; display: flex; flex-direction: column; }
.cursors { height: 61px; padding-top: 10px; font-size: 12.5px; }
.cursor-row { display: grid; grid-template-columns: 21px 46px 46px 10px auto; align-items: center; height: 20px; }
.cursor-row b { grid-column: 4; justify-self: center; }
.cursor-row span:last-child { padding-left: 1px; letter-spacing: -.2px; }
.base-name { grid-column: 3; letter-spacing: -.4px; }
.cur-name { letter-spacing: .55px; }
.mini { display: block; width: 17px; height: 17px; border: 1px solid; border-color: #fff #999 #999 #fff; }

.lists { flex: 1; display: flex; gap: 7px; }
.list { background: #000; color: #e6e6e6; border-right: 1px solid #999; }
.names { width: 219px; }
.values { width: 94px; font: 12.5px/1 "DejaVu Sans Mono", monospace; }
.list-head {
  height: 25px;
  display: flex;
  align-items: center;
  justify-content: space-between;
  padding-left: 4px;
  background: #b0b0b0;
  color: #111;
  font: 15px/23px "Liberation Sans", sans-serif;
}
.list-head span { padding-bottom: 2px; }
.name-head { font-size: 14.5px; }
.signal { height: 26px; display: flex; align-items: center; font-size: 13px; color: #e6e6e6; }
.signal span { padding-top: 2px; }
.signal.selected span { padding-top: 4px; }
.signal.selected { height: 25px; }
.signal.selected, .value.selected { background: #ffffbb; color: #111; }
.signal:last-child { background: linear-gradient(#aaa, #aaa) 13px 0 / 206px 1px no-repeat; }
.value { height: 25px; line-height: 24px; padding-left: 3px; white-space: pre; }

/* waveform */
.ruler-text { font: 15px "Liberation Sans", sans-serif; fill: #ddd; }
.flag-text { font: 15px "Liberation Sans", sans-serif; fill: #fff; }
.bus-text { font: 12.5px "DejaVu Sans Mono", monospace; fill: #e6e6e6; }
.zeros { font-family: "Liberation Sans", sans-serif; font-size: 12px; }

/* scrollbar */
.scroll { flex: 1; padding: 86px 0 0 1px; display: flex; flex-direction: column; }
.scroll-up { width: 100%; height: 18px; background: #a8a8a8; border-top: 1px solid #777; }
.thumb { flex: 1; background: #e7e7e7; border-left: 3px solid #fff; border-right: 3px solid #999; box-shadow: -1px 0 #777; }
```
